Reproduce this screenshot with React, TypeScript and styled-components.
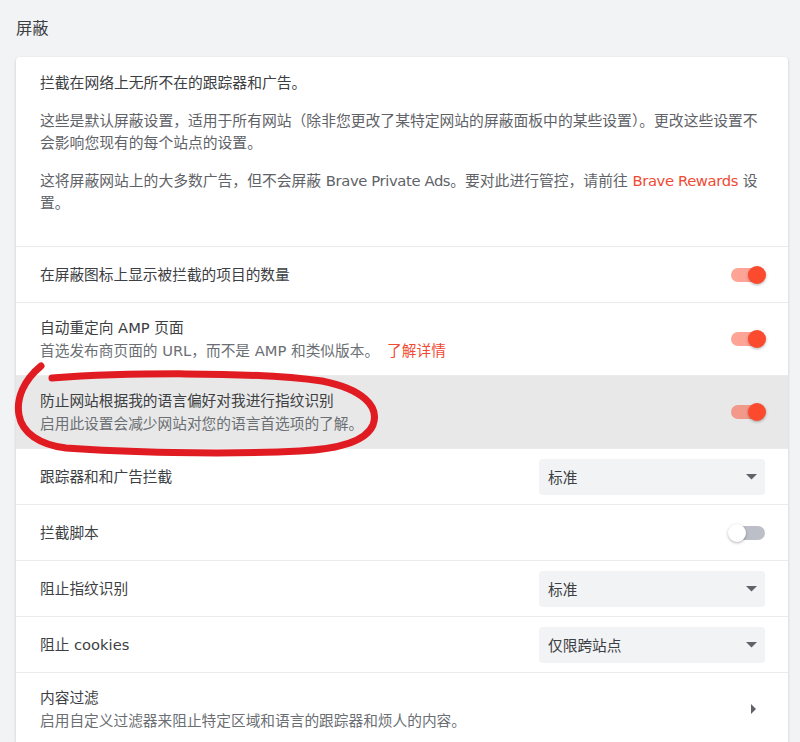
import React from "react";
import styled, { createGlobalStyle } from "styled-components";

const GlobalStyle = createGlobalStyle`
  html, body {
    margin: 0;
    padding: 0;
    background: #f1f3f4;
    overflow: hidden;
  }
  body {
    font-family: "DejaVu Sans", "Noto Sans CJK SC", sans-serif;
    -webkit-font-smoothing: antialiased;
  }
`;

const Page = styled.div`
  position: relative;
  padding: 0 12px 0 16px;
  min-height: 742px;
  box-sizing: border-box;
`;

const Header = styled.div`
  box-sizing: border-box;
  height: 57px;
  padding-bottom: 4px;
  display: flex;
  align-items: center;
  font-size: 16.3px;
  color: #3c4043;
`;

const Card = styled.div`
  background: #ffffff;
  border-radius: 4px;
  box-shadow: 0 1px 3px rgba(60, 64, 67, 0.18), 0 1px 2px rgba(60, 64, 67, 0.08);
`;

const Intro = styled.div`
  padding: 15px 24px 32px;
`;

const IntroText = styled.p<{ $lead?: boolean }>`
  margin: 0 0 16px;
  font-size: 14.8px;
  line-height: 22px;
  color: ${(p) => (p.$lead ? "#3c4043" : "#5f6368")};
  &:last-child {
    margin-bottom: 0;
  }
`;

const Brand = styled.span`
  letter-spacing: -0.4px;
`;

const Link = styled.span<{ $gap?: boolean; $tight?: boolean }>`
  color: #ef4a34;
  margin-left: ${(p) => (p.$gap ? "8px" : "0")};
  letter-spacing: ${(p) => (p.$tight ? "-0.4px" : "normal")};
`;

const Row = styled.div<{ $highlight?: boolean }>`
  display: flex;
  align-items: center;
  justify-content: space-between;
  gap: 16px;
  min-height: 55px;
  padding: 0 23px 0 24px;
  border-top: 1px solid #ececec;
  background: ${(p) => (p.$highlight ? "#e8e8e8" : "transparent")};
`;

const RowText = styled.div<{ $twoLine?: boolean }>`
  display: flex;
  flex-direction: column;
  padding: ${(p) => (p.$twoLine ? "13px 0" : "0")};
`;

const RowTitle = styled.div`
  font-size: 14.7px;
  line-height: 24px;
  color: #3c4043;
`;

const RowSub = styled.div`
  font-size: 14.7px;
  line-height: 22px;
  color: #6b6f74;
`;

const Track = styled.div<{ $on?: boolean }>`
  position: relative;
  width: 34px;
  height: 14px;
  border-radius: 7px;
  flex-shrink: 0;
  background: ${(p) => (p.$on ? "rgba(251, 74, 45, 0.5)" : "#bcbfc7")};
`;

const Knob = styled.div<{ $on?: boolean }>`
  position: absolute;
  top: -2px;
  left: ${(p) => (p.$on ? "17px" : "-3px")};
  width: 18px;
  height: 18px;
  border-radius: 50%;
  background: ${(p) => (p.$on ? "#fb4a2d" : "#ffffff")};
  box-shadow: 0 1px 3px rgba(0, 0, 0, 0.3);
`;

const Select = styled.div`
  display: flex;
  align-items: center;
  justify-content: space-between;
  box-sizing: border-box;
  width: 226px;
  height: 36px;
  padding: 0 8px 0 9px;
  border-radius: 4px;
  background: #f1f3f4;
  font-size: 14.7px;
  color: #3c4043;
  flex-shrink: 0;
`;

const ArrowBox = styled.div`
  width: 24px;
  height: 24px;
  display: flex;
  align-items: center;
  justify-content: center;
  flex-shrink: 0;
`;

const Annotation = styled.svg`
  position: absolute;
  top: 0;
  left: 0;
  pointer-events: none;
`;

const Toggle = ({ on }: { on?: boolean }) => (
  <Track $on={on}>
    <Knob $on={on} />
  </Track>
);

const Dropdown = ({ value }: { value: string }) => (
  <Select>
    <span>{value}</span>
    <svg width="11" height="6" viewBox="0 0 11 6">
      <path d="M0 0 L11 0 L5.5 5.5 Z" fill="#5f6368" />
    </svg>
  </Select>
);

export default function App() {
  return (
    <>
      <GlobalStyle />
      <Page>
        <Header>屏蔽</Header>
        <Card>
          <Intro>
            <IntroText $lead>拦截在网络上无所不在的跟踪器和广告。</IntroText>
            <IntroText>
              这些是默认屏蔽设置，适用于所有网站（除非您更改了某特定网站的屏蔽面板中的某些设置）。更改这些设置不会影响您现有的每个站点的设置。
            </IntroText>
            <IntroText>
              这将屏蔽网站上的大多数广告，但不会屏蔽 <Brand>Brave Private Ads</Brand>。要对此进行管控，请前往{" "}
              <Link $tight>Brave Rewards</Link> 设置。
            </IntroText>
          </Intro>
          <Row>
            <RowText>
              <RowTitle>在屏蔽图标上显示被拦截的项目的数量</RowTitle>
            </RowText>
            <Toggle on />
          </Row>
          <Row>
            <RowText $twoLine>
              <RowTitle>自动重定向 AMP 页面</RowTitle>
              <RowSub>
                首选发布商页面的 URL，而不是 AMP 和类似版本。<Link $gap>了解详情</Link>
              </RowSub>
            </RowText>
            <Toggle on />
          </Row>
          <Row $highlight>
            <RowText $twoLine>
              <RowTitle>防止网站根据我的语言偏好对我进行指纹识别</RowTitle>
              <RowSub>启用此设置会减少网站对您的语言首选项的了解。</RowSub>
            </RowText>
            <Toggle on />
          </Row>
          <Row>
            <RowText>
              <RowTitle>跟踪器和和广告拦截</RowTitle>
            </RowText>
            <Dropdown value="标准" />
          </Row>
          <Row>
            <RowText>
              <RowTitle>拦截脚本</RowTitle>
            </RowText>
            <Toggle />
          </Row>
          <Row>
            <RowText>
              <RowTitle>阻止指纹识别</RowTitle>
            </RowText>
            <Dropdown value="标准" />
          </Row>
          <Row>
            <RowText>
              <RowTitle>阻止 cookies</RowTitle>
            </RowText>
            <Dropdown value="仅限跨站点" />
          </Row>
          <Row>
            <RowText $twoLine>
              <RowTitle>内容过滤</RowTitle>
              <RowSub>启用自定义过滤器来阻止特定区域和语言的跟踪器和烦人的内容。</RowSub>
            </RowText>
            <ArrowBox>
              <svg width="5" height="10" viewBox="0 0 5 10">
                <path d="M0 0 L5 5 L0 10 Z" fill="#5f6368" />
              </svg>
            </ArrowBox>
          </Row>
        </Card>
        <Annotation width="800" height="742" viewBox="0 0 800 742">
          <path
            d="M52 378 C120 373, 250 371, 322 381 C362 389, 380 406, 373 425 C366 441, 340 449, 300 451 C220 455, 120 452, 66 448 C40 445, 22 433, 19 415 C16 398, 24 380, 41 366"
            fill="none"
            stroke="#e11b22"
            strokeWidth="7"
            strokeLinecap="round"
            strokeLinejoin="round"
          />
        </Annotation>
      </Page>
    </>
  );
}
